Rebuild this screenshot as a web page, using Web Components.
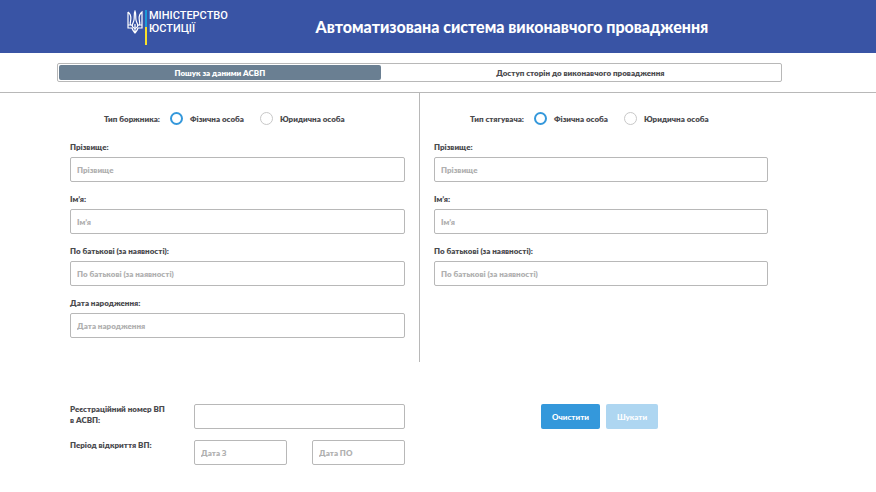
<!DOCTYPE html>
<html lang="uk">
<head>
<meta charset="utf-8">
<meta name="viewport" content="width=device-width, initial-scale=1">
<title>Автоматизована система виконавчого провадження</title>
<style>
    :root
    {
        --brand: #3954a5;
        --accent: #3498db;
        --line: #b8b8b8;
        --slate: #6a7f92;
        --hint: #b0b0b0;
    }

    body
    {
        margin: 0;
        background: #fff;
        color: #4a4a4e;
        font: 800 8px/12px Lato, "Open Sans", sans-serif;
    }
</style>
</head>
<body>
<page-header>Автоматизована система виконавчого провадження</page-header>
<main>
    <tab-bar>
        <button role="tab" aria-selected="true">Пошук за даними АСВП</button>
        <button role="tab" aria-selected="false">Доступ сторін до виконавчого провадження</button>
    </tab-bar>
    <search-form>
        <party-panel slot="left">
            <person-type label="Тип боржника:"></person-type>
            <text-field label="Прізвище:" hint="Прізвище"></text-field>
            <text-field label="Ім’я:" hint="Ім’я"></text-field>
            <text-field label="По батькові (за наявності):" hint="По батькові (за наявності)"></text-field>
            <text-field label="Дата народження:" hint="Дата народження"></text-field>
        </party-panel>
        <party-panel slot="right">
            <person-type label="Тип стягувача:"></person-type>
            <text-field label="Прізвище:" hint="Прізвище"></text-field>
            <text-field label="Ім’я:" hint="Ім’я"></text-field>
            <text-field label="По батькові (за наявності):" hint="По батькові (за наявності)"></text-field>
        </party-panel>
        <case-fields slot="case"></case-fields>
        <form-actions slot="actions"></form-actions>
    </search-form>
</main>

<template id="page-header">
    <style>
        :host
        {
            display: flex;
            align-items: center;
            min-height: 53px;
            padding: 0 80px 0 127px;
            box-sizing: border-box;
            background: var(--brand);
            color: #fff;
        }

        .logo
        {
            display: flex;
            gap: 2px;
            height: 36px;
            color: inherit;
            text-decoration: none;
            font: 500 11px/13px Roboto, sans-serif;
        }

        .trident
        {
            width: 16px;
            height: 24px;
            margin-top: 1px;
        }

        .flag
        {
            width: 2px;
            margin-top: 1px;
            background: linear-gradient(#1c9ad8 50%, #f8e12b 50%);
        }

        h1
        {
            flex: 1;
            margin: 0;
            text-align: center;
            font-size: 16px;
            font-weight: 900;
            line-height: 20px;
        }
    </style>
    <a class="logo" href="#">
        <svg class="trident" viewBox="0 0 16 24" fill="none" stroke="#fff" stroke-width="1.2" aria-hidden="true">
            <path d="M8 1 C6.8 3 7.6 7 7 10 C6.7 12 5.5 13.4 5.3 15 C5.2 17 6.7 18.3 8 18.3 C9.3 18.3 10.8 17 10.7 15 C10.5 13.4 9.3 12 9 10 C8.4 7 9.2 3 8 1 Z"/>
            <path d="M1 2 V18 H5 C5.5 20 6.5 21 8 23 C9.5 21 10.5 20 11 18 H15 V2 C12.5 4 12 7 12.2 9 L12.7 13 C13.2 15 11.8 15.5 10.7 15 M1 2 C3.5 4 4 7 3.8 9 L3.3 13 C2.8 15 4.2 15.5 5.3 15 M8 14 V22 M1 15 H3.5 M12.5 15 H15"/>
        </svg>
        <span class="flag"></span>
        <span>МІНІСТЕРСТВО<br>ЮСТИЦІЇ</span>
    </a>
    <h1><slot></slot></h1>
</template>

<template id="tab-bar">
    <style>
        :host
        {
            display: flex;
            margin: 10px 94px 10px 57px;
            padding: 1px;
            border: 1px solid var(--line);
            border-radius: 2px;
        }

        ::slotted(button)
        {
            flex: 1 1 auto;
            height: 15px;
            padding: 0;
            border: 0;
            border-radius: 2px;
            background: none;
            color: inherit;
            font: inherit;
            cursor: pointer;
        }

        ::slotted(button[aria-selected="true"])
        {
            background: var(--slate);
            color: #fff;
        }
    </style>
    <slot></slot>
</template>

<template id="search-form">
    <style>
        :host
        {
            display: block;
            border-top: 1px solid var(--line);
        }

        .parties,
        .extra
        {
            display: grid;
            grid-template-columns: 1fr 1fr;
            margin: 0 94px 0 56px;
        }

        .extra
        {
            margin-top: 42px;
        }

        ::slotted([slot="right"])
        {
            border-left: 1px solid var(--line);
        }
    </style>
    <form>
        <div class="parties">
            <slot name="left"></slot>
            <slot name="right"></slot>
        </div>
        <div class="extra">
            <slot name="case"></slot>
            <slot name="actions"></slot>
        </div>
    </form>
</template>

<template id="party-panel">
    <style>
        :host
        {
            display: flex;
            flex-direction: column;
            gap: 11px;
            padding: 19px 14px 24px;
        }
    </style>
    <slot></slot>
</template>

<template id="person-type">
    <style>
        :host
        {
            display: block;
            margin-bottom: 5px;
        }

        div
        {
            display: flex;
            align-items: center;
            gap: 16px;
        }

        .caption
        {
            width: 90px;
            margin-right: -6px;
            text-align: right;
        }

        label
        {
            display: flex;
            align-items: center;
            gap: 7px;
        }

        input
        {
            appearance: none;
            box-sizing: border-box;
            width: 13px;
            height: 13px;
            margin: 0;
            border: 1px solid #c8c8c8;
            border-radius: 50%;
        }

        input:checked
        {
            border: 2px solid var(--accent);
        }
    </style>
    <div role="radiogroup" aria-labelledby="caption">
        <span class="caption" id="caption"></span>
        <label><input type="radio" name="type" checked>Фізична особа</label>
        <label><input type="radio" name="type">Юридична особа</label>
    </div>
</template>

<template id="text-field">
    <style>
        :host
        {
            display: flex;
            flex-direction: column;
            gap: 4px;
        }

        input
        {
            box-sizing: border-box;
            width: 100%;
            height: 25px;
            padding: 0 6px;
            border: 1px solid var(--line);
            border-radius: 2px;
            color: inherit;
            font: inherit;
        }

        input::placeholder
        {
            color: var(--hint);
        }
    </style>
    <label for="field"></label>
    <input id="field" type="text">
</template>

<template id="case-fields">
    <style>
        :host
        {
            display: grid;
            grid-template-columns: 99px 1fr 1fr;
            gap: 11px 25px;
            padding: 0 14px;
            line-height: 11px;
        }

        label
        {
            white-space: nowrap;
        }

        input
        {
            box-sizing: border-box;
            width: 100%;
            height: 25px;
            padding: 0 6px;
            border: 1px solid var(--line);
            border-radius: 2px;
            color: inherit;
            font: inherit;
        }

        .wide
        {
            grid-column: span 2;
        }

        input::placeholder
        {
            color: var(--hint);
        }
    </style>
    <label for="number">Реєстраційний номер ВП<br>в АСВП:</label>
    <input class="wide" id="number" type="text">
    <label for="from">Період відкриття ВП:</label>
    <input id="from" type="text" placeholder="Дата З">
    <input type="text" placeholder="Дата ПО" aria-label="Дата ПО">
</template>

<template id="form-actions">
    <style>
        :host
        {
            display: flex;
            align-items: flex-start;
            gap: 6px;
            padding-left: 122px;
        }

        button
        {
            height: 25px;
            padding: 0 11px;
            border: 0;
            border-radius: 2px;
            background: var(--accent);
            color: #fff;
            font: inherit;
            font-weight: 900;
        }

        button:disabled
        {
            background: #aed6f1;
        }
    </style>
    <button type="reset">Очистити</button>
    <button type="submit" disabled>Шукати</button>
</template>

<script>
class TemplateElement extends HTMLElement
{
    constructor()
    {
        super()
        const template = document.getElementById(this.localName)
        this.attachShadow({mode: "open"}).append(template.content.cloneNode(true))
    }
}

class TabBar extends TemplateElement
{
    connectedCallback()
    {
        this.setAttribute("role", "tablist")
        this.addEventListener("click", (e) =>
        {
            const tab = e.target.closest("button")
            if (!tab) return
            for (const button of this.querySelectorAll("button"))
            {
                button.setAttribute("aria-selected", button === tab)
            }
        })
    }
}

class PersonType extends TemplateElement
{
    connectedCallback()
    {
        this.shadowRoot.querySelector("#caption").textContent = this.getAttribute("label")
    }
}

class TextField extends TemplateElement
{
    connectedCallback()
    {
        this.shadowRoot.querySelector("label").textContent = this.getAttribute("label")
        this.shadowRoot.querySelector("input").placeholder = this.getAttribute("hint")
    }
}

customElements.define("page-header", class extends TemplateElement {})
customElements.define("tab-bar", TabBar)
customElements.define("search-form", class extends TemplateElement {})
customElements.define("party-panel", class extends TemplateElement {})
customElements.define("person-type", PersonType)
customElements.define("text-field", TextField)
customElements.define("case-fields", class extends TemplateElement {})
customElements.define("form-actions", class extends TemplateElement {})
</script>
</body>
</html>
